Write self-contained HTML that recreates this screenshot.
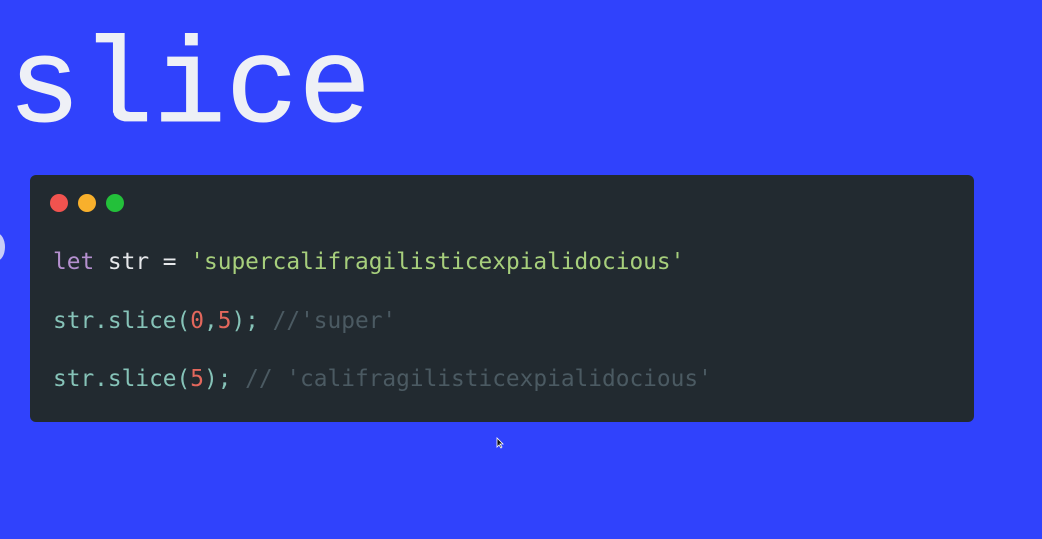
<!DOCTYPE html>
<html><head><style>
html,body{margin:0;padding:0}
body{width:1042px;height:539px;background:#3042fc;position:relative;overflow:hidden}
.t{position:absolute;left:8px;top:10px;font-family:"Liberation Mono","Cousine","Courier New",monospace;font-size:121px;line-height:160px;color:#eef0f6;white-space:pre;-webkit-text-stroke:1px #eef0f6}
.card{position:absolute;left:30px;top:175px;width:944px;height:247px;background:#222a30;border-radius:6px}
.d{position:absolute;top:194px;width:18px;height:18px;border-radius:50%}
.c{position:absolute;left:53px;font-family:"DejaVu Sans Mono",monospace;font-size:22.8px;white-space:pre;line-height:30px}
.k{color:#b590cf}.w{color:#e6e8ea}.s{color:#a7cf7c}.f{color:#86c3b8}.n{color:#e3675c}.g{color:#4b5a62}
</style></head><body>
<div class="t">slice</div>
<div style="position:absolute;left:-12px;top:233px;width:17px;height:28px;border-radius:50%;background:#c9cdf7"></div>
<div class="card"></div>
<div class="d" style="left:50px;background:#f1534f"></div>
<div class="d" style="left:78px;background:#f8b02c"></div>
<div class="d" style="left:106px;background:#23c03a"></div>
<div class="c" style="top:247px"><span class="k">let</span><span class="w"> str = </span><span class="s">'supercalifragilisticexpialidocious'</span></div>
<div class="c" style="top:306px"><span class="f">str.slice(</span><span class="n">0</span><span class="f">,</span><span class="n">5</span><span class="f">);</span><span class="g"> //'super'</span></div>
<div class="c" style="top:364px"><span class="f">str.slice(</span><span class="n">5</span><span class="f">);</span><span class="g"> // 'califragilisticexpialidocious'</span></div>
<svg style="position:absolute;left:496px;top:437px" width="8" height="12" viewBox="0 0 8 12"><path d="M1 1 L1 10 L3 8 L5 11 L6 10 L4 7 L7 7 Z" fill="#111" stroke="#fff" stroke-width="0.8"/></svg>
</body></html>
